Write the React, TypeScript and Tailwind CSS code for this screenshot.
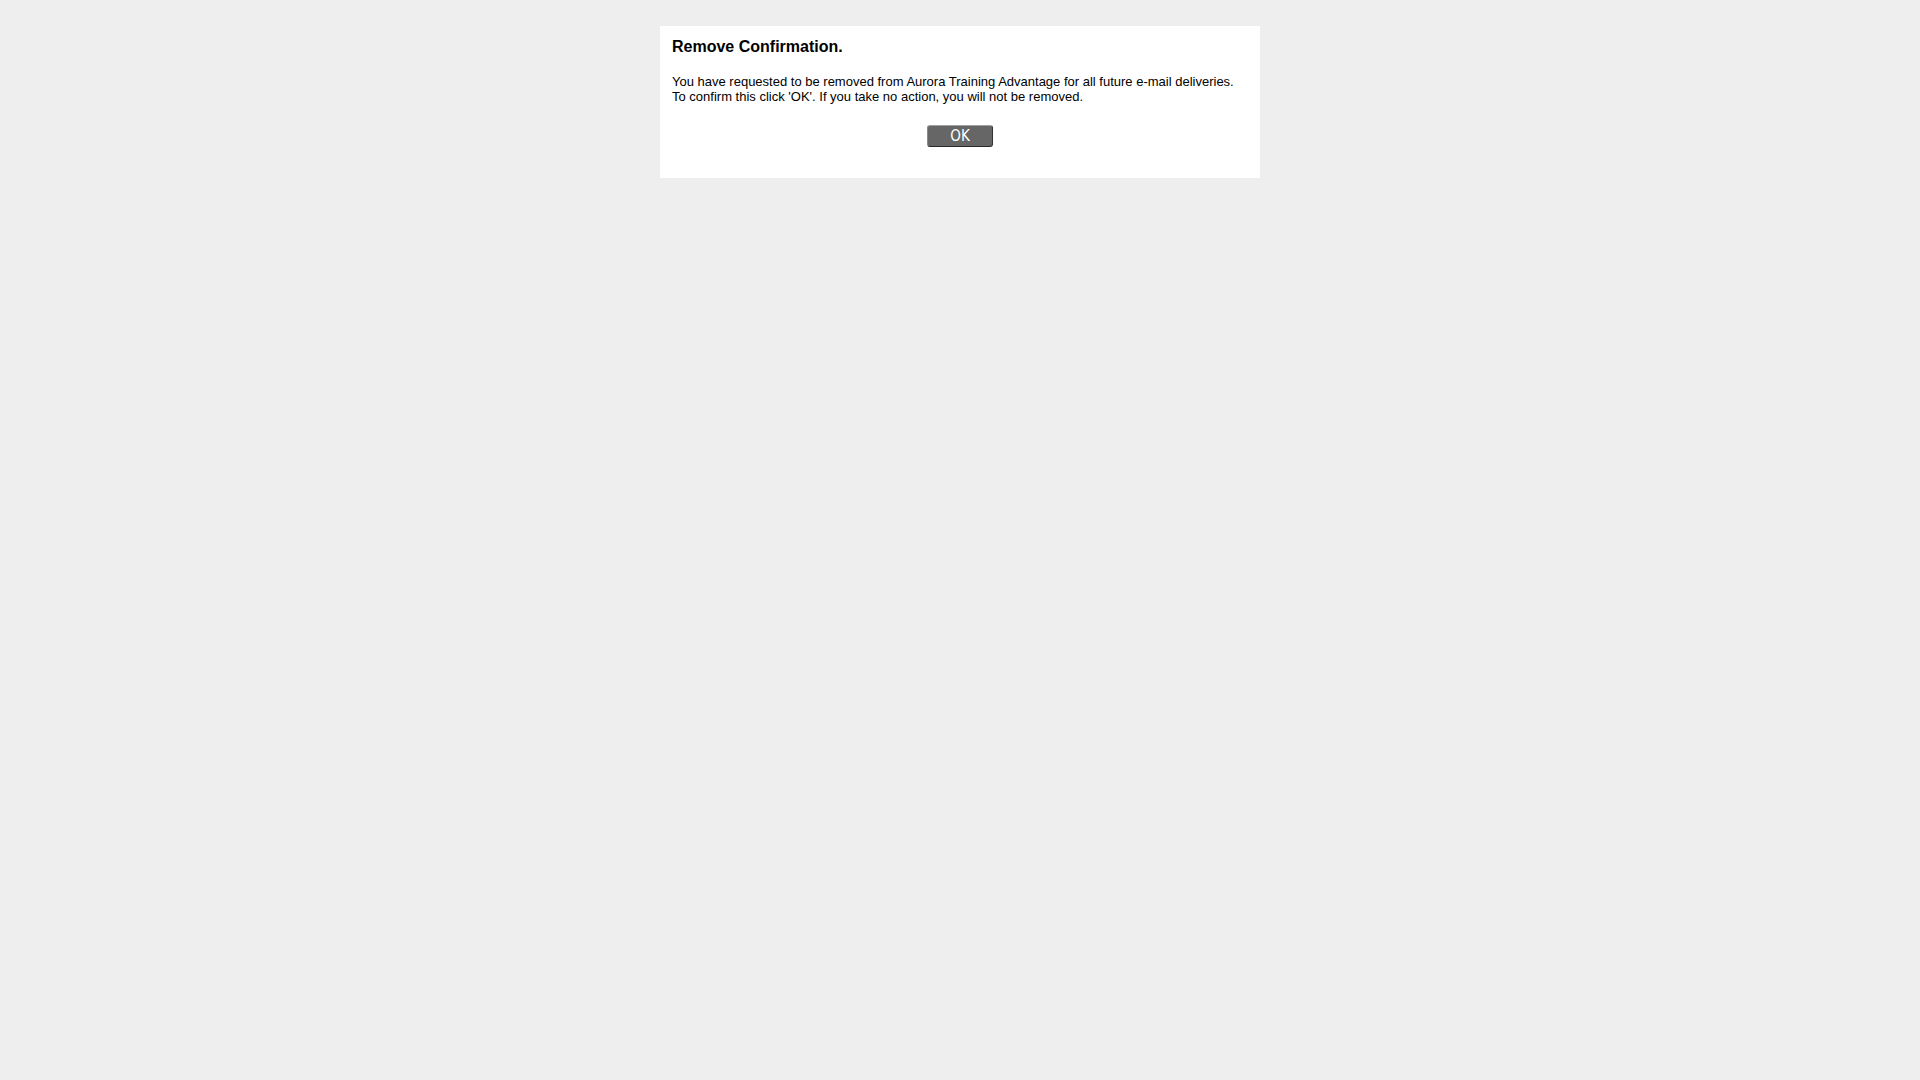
export default function App() {
  return (
    <div className="min-h-screen bg-[#eeeeee] pt-[26px] font-['Liberation_Sans',Arial,sans-serif] text-black">
      <div className="mx-auto w-[600px] h-[152px] bg-white px-3 pt-[12px]">
        <h1 className="text-[16px] leading-[18px] font-bold">Remove Confirmation.</h1>
        <p className="mt-[18px] text-[13px] leading-[15px]">
          You have requested to be removed from Aurora Training Advantage for all future e-mail deliveries.
          <br />
          To confirm this click 'OK'. If you take no action, you will not be removed.
        </p>
        <div className="mt-[21px] flex justify-center">
          <button
            type="button"
            className="w-[66px] h-[22px] rounded-[3px] bg-[#666666] border border-t-[#a0a0a0] border-l-[#8a8a8a] border-r-[#333333] border-b-[#2a2a2a] text-white text-[15px] leading-none font-['DejaVu_Sans_Condensed','Liberation_Sans_Narrow','DejaVu_Sans',sans-serif] [font-stretch:condensed] flex items-center justify-center"
          >
            OK
          </button>
        </div>
      </div>
    </div>
  );
}
